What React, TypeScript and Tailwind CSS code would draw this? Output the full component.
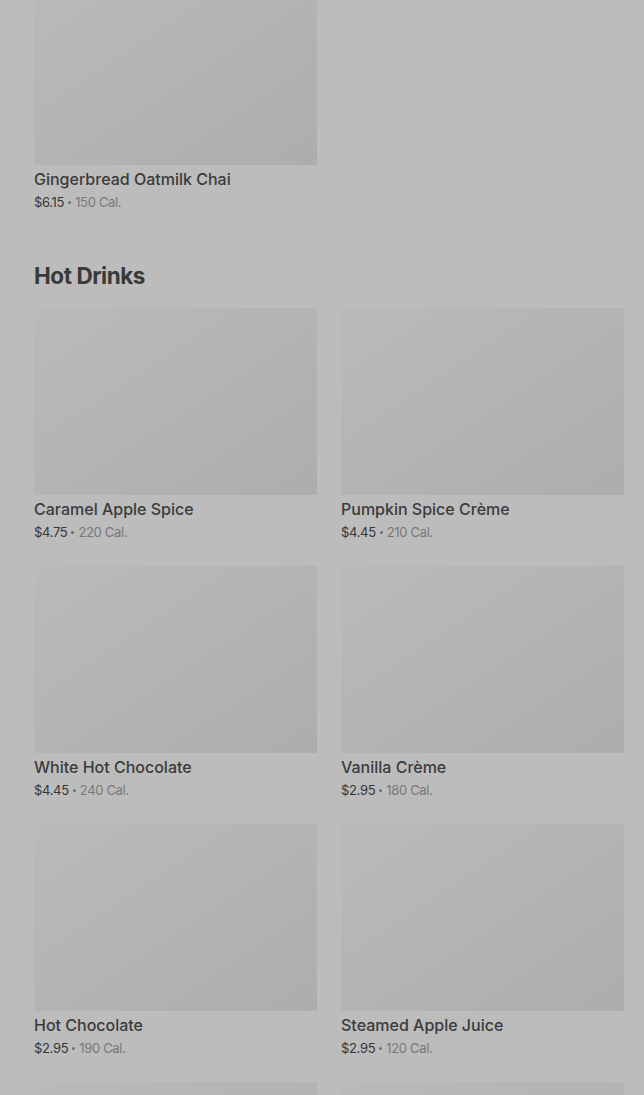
type Item = { name: string; price: string; cal: string }

const hotDrinks: Item[] = [
  { name: 'Caramel Apple Spice', price: '$4.75', cal: '220 Cal.' },
  { name: 'Pumpkin Spice Crème', price: '$4.45', cal: '210 Cal.' },
  { name: 'White Hot Chocolate', price: '$4.45', cal: '240 Cal.' },
  { name: 'Vanilla Crème', price: '$2.95', cal: '180 Cal.' },
  { name: 'Hot Chocolate', price: '$2.95', cal: '190 Cal.' },
  { name: 'Steamed Apple Juice', price: '$2.95', cal: '120 Cal.' },
]

function Thumb() {
  return <div className="h-[187px] w-full bg-gradient-to-br from-[#bababa] to-[#adadad]" />
}

function MenuCard({ item }: { item: Item }) {
  return (
    <div className="flex flex-col">
      <Thumb />
      <div className="pt-1">
        <div className="text-[16px] leading-5 font-medium text-[#3b3b3b]">{item.name}</div>
        <div className="mt-1 flex items-center text-[13px] leading-[18px] tracking-[-0.025em]">
          <span className="text-[#363636]">{item.price}</span>
          <span className="mx-[4px] inline-block h-[3px] w-[3px] rounded-full bg-[#6e6e6e]" />
          <span className="text-[#787878]">{item.cal}</span>
        </div>
      </div>
    </div>
  )
}

export default function App() {
  return (
    <div
      className="h-[1095px] overflow-hidden bg-[#bcbcbc] pl-[34px] pr-[20px]"
      style={{ fontFamily: 'Inter, "Liberation Sans", sans-serif' }}
    >
      <div className="-mt-[22px] grid grid-cols-2 gap-x-6">
        <MenuCard item={{ name: 'Gingerbread Oatmilk Chai', price: '$6.15', cal: '150 Cal.' }} />
      </div>

      <h2 className="mt-[51px] mb-[18px] text-[22.5px] leading-7 font-bold tracking-[-0.02em] text-[#3a3a3a]">
        Hot Drinks
      </h2>

      <div className="grid grid-cols-2 gap-x-6 gap-y-[25px]">
        {hotDrinks.map((item) => (
          <MenuCard key={item.name} item={item} />
        ))}
        {/* next row, only its pictures show above the fold */}
        <Thumb />
        <Thumb />
      </div>
    </div>
  )
}
